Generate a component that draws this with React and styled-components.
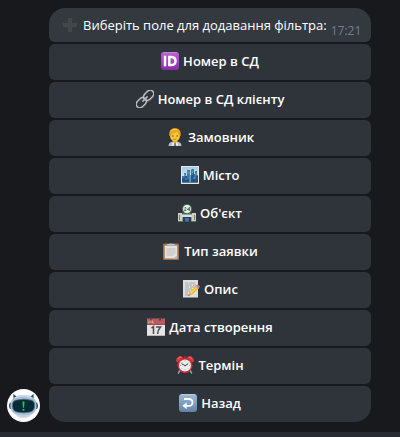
import React from "react";
import styled, { createGlobalStyle } from "styled-components";

const GlobalStyle = createGlobalStyle`
  *, *::before, *::after { box-sizing: border-box; }
  body {
    margin: 0;
    background: #18191d;
    color: #ffffff;
    font-family: "Open Sans", "Noto Sans", sans-serif;
    font-size: 13px;
    line-height: 18px;
  }
`;

const Page = styled.main`
  display: flex;
  flex-direction: column;
  min-height: 100vh;
`;

const Chat = styled.section`
  flex: 1;
  display: flex;
  align-items: flex-start;
  padding: 8px 29px 10px 7px;
`;

const MessageRow = styled.article`
  flex: 1;
  display: flex;
  align-items: flex-end;
  gap: 9px;
  min-width: 0;
`;

const Avatar = styled.svg`
  width: 33px;
  height: 33px;
  flex: none;
`;

const Stack = styled.div`
  flex: 1;
  min-width: 0;
  display: flex;
  flex-direction: column;
  gap: 2px;
`;

const Bubble = styled.div`
  display: flex;
  align-items: center;
  gap: 4px;
  min-height: 34px;
  padding: 0 10px 0 12px;
  background: #33393f;
  border-radius: 16px 16px 6px 6px;
`;

const MessageText = styled.p`
  flex: 1;
  margin: 0;
  white-space: nowrap;
`;

const Time = styled.time`
  align-self: flex-end;
  margin-bottom: 2px;
  color: #72808d;
  font-size: 12px;
`;

const Keyboard = styled.div`
  display: flex;
  flex-direction: column;
  gap: 2px;
`;

const KeyButton = styled.button`
  display: flex;
  align-items: center;
  justify-content: center;
  gap: 4px;
  height: 36px;
  padding: 0 12px 2px;
  border: 0;
  border-radius: 6px;
  background: #2f343a;
  color: inherit;
  font: inherit;
  font-weight: 600;
  cursor: pointer;

  &:last-child { border-radius: 6px 6px 16px 16px; }
  &:hover { background: #363c43; }
`;

const Icon = styled.svg`
  width: 18px;
  height: 18px;
  flex: none;
`;

const Composer = styled.footer`
  height: 5px;
  background: #282b31;
`;

function Emoji({ children }) {
  return (
    <Icon viewBox="0 0 18 18" aria-hidden="true">
      {children}
    </Icon>
  );
}

const PlusIcon = () => (
  <Emoji>
    <path d="M7 2h4v5h5v4h-5v5H7v-5H2V7h5z" fill="#464748" />
  </Emoji>
);

const IdIcon = () => (
  <Emoji>
    <defs>
      <linearGradient id="idFill" x2="0" y2="1">
        <stop stopColor="#bd61d2" />
        <stop offset="1" stopColor="#8b2bad" />
      </linearGradient>
    </defs>
    <rect width="18" height="18" rx="3" fill="url(#idFill)" />
    <path d="M2.500 .7h13" stroke="#d48be2" strokeWidth=".8" strokeLinecap="round" />
    <g fill="none" stroke="#fff" strokeWidth="2.500">
      <path d="M4 3.700v10.600" />
      <path d="M8.300 4.900H10c3 0 4.500 1.300 4.500 4.100S13 13.100 10 13.100H8.300z" />
    </g>
  </Emoji>
);

const LinkIcon = () => (
  <Emoji>
    <g transform="rotate(-45 9 9)" fill="none">
      <g stroke="#787d84" strokeWidth="2">
        <rect x="-2" y="5.400" width="11.500" height="7.400" rx="3.700" />
        <rect x="8.500" y="5.400" width="11.500" height="7.400" rx="3.700" />
      </g>
      <g stroke="#d5d7dc" strokeWidth=".9">
        <rect x="-2" y="5.200" width="11.500" height="7.400" rx="3.700" />
        <rect x="8.500" y="5.200" width="11.500" height="7.400" rx="3.700" />
      </g>
      <path d="M6 9h6" stroke="#aeb2b8" strokeWidth="1.800" strokeLinecap="round" />
    </g>
  </Emoji>
);

const PersonIcon = () => (
  <Emoji>
    <path d="M2.500 18c0-3 2-4 4.500-4.500h4c2.500.5 4.500 1.500 4.500 4.500z" fill="#bdbfc3" />
    <path d="M7 13h4l1 5H6z" fill="#f4f5f7" />
    <path d="M6.800 11h4.400v3L9 15.500 6.800 14z" fill="#e6a51f" />
    <path d="M8.300 15h1.400l.7 3H7.600z" fill="#777b83" />
    <ellipse cx="9" cy="7.500" rx="5" ry="6" fill="#fcc83b" />
    <path d="M3.500 8C2.500 2.500 5.300.2 9 .2s6.500 2.300 5.500 7.800L13 8c.1-2.500-1-3.500-2.700-4C8.200 5.500 5.500 4.700 5 8z" fill="#efa31c" />
    <path d="M5 3.500C6.300 1.300 9 .8 11.500 1.800" fill="none" stroke="#ffd664" />
    <circle cx="6.900" cy="8" r=".7" fill="#624321" />
    <circle cx="11.100" cy="8" r=".7" fill="#624321" />
    <path d="M7.300 11q1.700.9 3.400 0" fill="none" stroke="#9b5b20" strokeWidth=".7" />
  </Emoji>
);

const CityIcon = () => (
  <Emoji>
    <defs>
      <linearGradient id="sky" x2="0" y2="1">
        <stop stopColor="#a5cee9" />
        <stop offset="1" stopColor="#e3f0f6" />
      </linearGradient>
    </defs>
    <path d="M0 0h18v18H0z" fill="#e8e7e4" />
    <path d="M1 1h16v16H1z" fill="url(#sky)" />
    <path d="M1 10h2V7h2v3h1V4h3v5h1V4l1-1h2v5h1V5h2v4h1v8H1z" fill="#3f77aa" />
    <path d="M1 12h3v-2h2v3h2V8h1v9H1zM10 9h2V6h1v7h2v-3h2v7h-7z" fill="#235587" />
    <path d="M3.500 8v2M7 5.500v2M8 6v2M11.500 5v2M15 7v2M5 12v2M13 11v2" stroke="#86b6d7" strokeWidth=".7" />
    <path d="M9 8v9" stroke="#bde0ef" strokeWidth=".7" />
    <path d="M1 16.500h16" stroke="#557e9e" />
  </Emoji>
);

const StoreIcon = () => (
  <Emoji>
    <path d="M0 9.500h18V17H0z" fill="#9c9e93" />
    <path d="M0 9h4v8H0zM14 9h4v8h-4z" fill="#d1d0bd" />
    <path d="M1.500 11v5M16.500 11v5" stroke="#797c76" />
    <path d="M4 11h10v2H4z" fill="#d8e2e2" />
    <path d="M5 13h8v4.500H5z" fill="#263d57" />
    <path d="M7 14h4v3.500H7z" fill="#4a7193" />
    <path d="M0 17.500h5M13 17.500h5" stroke="#547b55" />
    <circle cx="9" cy="5" r="5" fill="#3c7958" />
    <circle cx="9" cy="5" r="3.900" fill="#edf2e9" />
    <path d="M6.400 4q1.600-1.500 1.700.2L6.300 6.600h2M11.300 6.900V3.300L9.300 5.700h2.600" fill="none" stroke="#34443b" strokeWidth=".8" />
  </Emoji>
);

const ClipboardIcon = () => (
  <Emoji>
    <rect x="1" y="1.500" width="16" height="16.500" rx="1" fill="#9d704b" />
    <path d="M2.700 3.500h12.600v13H2.700z" fill="#e3e2df" />
    <path d="M11.500 16.500l3.800-3.500v3.500z" fill="#b9b7b4" />
    <path d="M4.500 7h9M4.500 9h9M4.500 11h9M4.500 13h7" stroke="#b5b4b4" strokeWidth=".8" />
    <path d="M4 4l1-2h2.500a1.600 1.600 0 013 0H13l1 2z" fill="#a4a9ae" />
    <path d="M5.500 2.700h7" stroke="#d9dce0" strokeWidth=".7" />
    <circle cx="9" cy="1.500" r=".6" fill="#4e5358" />
  </Emoji>
);

const MemoIcon = () => (
  <Emoji>
    <path d="M1 0h15v17.500H1z" fill="#dedfdf" />
    <path d="M3 3h3M7 3h6M3 5h7M11 5h3M3 7h4M8 7h6M3 9h7M3 11h5M3 13h3M3 15h3" stroke="#9a9c9f" strokeWidth=".8" />
    <path d="M6.300 15.700l1.200-3.500 6.700-6.700 2.700 2.700-6.800 6.600z" fill="#f6bd2c" />
    <path d="M8.500 13.300l6.700-6.700" stroke="#ffe071" strokeWidth="1" />
    <path d="M14 5.700l1-1q.7-.6 1.400.1l1.200 1.200q.6.700 0 1.300l-1 1z" fill="#dc7181" />
    <path d="M13.200 6.500l2.700 2.700 1-1-2.700-2.700z" fill="#aab2b8" />
    <path d="M6.300 15.700l1.200-3.500 2.600 2.600z" fill="#e5b984" />
    <path d="M6.300 15.700l.5-1.500 1 1z" fill="#393939" />
  </Emoji>
);

const CalendarIcon = () => (
  <Emoji>
    <path d="M0 1h18v17H0z" fill="#e5e5e4" />
    <path d="M0 .5h18V7H0z" fill="#b75b60" />
    <path d="M0 6h18v1H0z" fill="#9c4950" />
    <path d="M2 2.500v2.500H1M4 3v2M5.500 2.500v2.500H7" fill="none" stroke="#ddb1b2" strokeWidth=".8" />
    <circle cx="13" cy="1.800" r="1" fill="#493b42" />
    <circle cx="4" cy="1.300" r=".8" fill="#493b42" />
    <path d="M4.500 10l2-1.300V16M9 9h4.500c-1.800 2-2.700 4-2.900 7" fill="none" stroke="#4b4c4f" strokeWidth="1.500" />
    <path d="M0 17.500h18" stroke="#b8b8b8" />
  </Emoji>
);

const ClockIcon = () => (
  <Emoji>
    <path d="M4 14l-1.500 3M14 14l1.500 3" stroke="#a6a9ae" strokeWidth="1.500" strokeLinecap="round" />
    <path d="M1 6.500A3.400 3.400 0 017.500 2zM10.500 2A3.400 3.400 0 0117 6.500z" fill="#dd3940" />
    <path d="M2 3q1-2 3-1.600M13 1.400q2-.4 3 1.600" fill="none" stroke="#ff8986" strokeWidth=".7" />
    <path d="M8 0h2v3H8z" fill="#9c2932" />
    <circle cx="9" cy="9.500" r="7.500" fill="#cd3037" />
    <circle cx="9" cy="9.500" r="6" fill="#eceeed" />
    <path d="M9 4.500v1M9 13.500v1M4 9.500h1M13 9.500h1M5.500 6l.6.600M12 12.500l.5.500M5.500 13l.6-.6M12 6.500l.5-.5" stroke="#86898b" strokeWidth=".7" />
    <path d="M5.500 7.500L9 9.700l3.300-2" fill="none" stroke="#35393e" strokeWidth="1" />
    <circle cx="9" cy="9.600" r=".8" fill="#5c6265" />
  </Emoji>
);

const BackIcon = () => (
  <Emoji>
    <defs>
      <linearGradient id="backFill" x2="0" y2="1">
        <stop stopColor="#9dbbd8" />
        <stop offset="1" stopColor="#6084a8" />
      </linearGradient>
    </defs>
    <rect width="18" height="18" rx="3" fill="url(#backFill)" />
    <path d="M2.500 .7h13" stroke="#bed5ea" strokeWidth=".8" strokeLinecap="round" />
    <path d="M5 5h5.200a3.400 3.400 0 010 6.800H6.500" fill="none" stroke="#fff" strokeWidth="1.800" />
    <path d="M3.300 11.800L7.700 8.400v6.800z" fill="#fff" />
  </Emoji>
);

const RobotAvatar = () => (
  <Avatar viewBox="0 0 33 33" role="img" aria-label="Бот">
    <circle cx="16.500" cy="16.500" r="16.500" fill="#fff" />
    <path d="M6.500 10L6.300 5l4 3zM26.500 10l.2-5-4 3z" fill="#28495e" />
    <path d="M3 13.500q-2.200 3 0 6.500h2v-6.500zM30 13.500q2.200 3 0 6.500h-2v-6.500z" fill="#365b74" />
    <path d="M5.500 10C8 7.500 11.700 6 16.500 6S25 7.500 27.500 10c2.500 3 2.900 9.800 0 13-2.500 3-6.500 4-11 4s-8.500-1-11-4c-2.900-3.200-2.500-10 0-13z" fill="#a9bed8" />
    <path d="M8 9Q16 4.500 25 9" fill="none" stroke="#d0dced" strokeWidth="1.300" />
    <path d="M7.500 24q9 5 18 0-2.500 5-9 5t-9-5z" fill="#cbd5e2" />
    <path d="M8.500 11.200q8-2 16 0c2.300.6 3.200 3 3.100 5.800-.1 3.300-1.600 5.500-4.600 6.100q-6.500 1.400-13 0c-3-.6-4.500-2.800-4.600-6.100-.1-2.800.8-5.200 3.100-5.800z" fill="#062b36" stroke="#4f7085" strokeWidth=".7" />
    <path d="M15.500 12.500h2l-.4 6.200h-1.200zM15.600 20h1.800v1.800h-1.800z" fill="#16d534" />
  </Avatar>
);

const FIELDS = [
  [IdIcon, "Номер в СД"],
  [LinkIcon, "Номер в СД клієнту"],
  [PersonIcon, "Замовник"],
  [CityIcon, "Місто"],
  [StoreIcon, "Об'єкт"],
  [ClipboardIcon, "Тип заявки"],
  [MemoIcon, "Опис"],
  [CalendarIcon, "Дата створення"],
  [ClockIcon, "Термін"],
  [BackIcon, "Назад"],
];

export default function App() {
  return (
    <Page>
      <GlobalStyle />
      <Chat>
        <MessageRow>
          <RobotAvatar />
          <Stack>
            <Bubble>
              <PlusIcon />
              <MessageText>Виберіть поле для додавання фільтра:</MessageText>
              <Time dateTime="17:21">17:21</Time>
            </Bubble>
            <Keyboard>
              {FIELDS.map(([Glyph, label]) => (
                <KeyButton type="button" key={label}>
                  <Glyph />
                  <span>{label}</span>
                </KeyButton>
              ))}
            </Keyboard>
          </Stack>
        </MessageRow>
      </Chat>
      <Composer />
    </Page>
  );
}
